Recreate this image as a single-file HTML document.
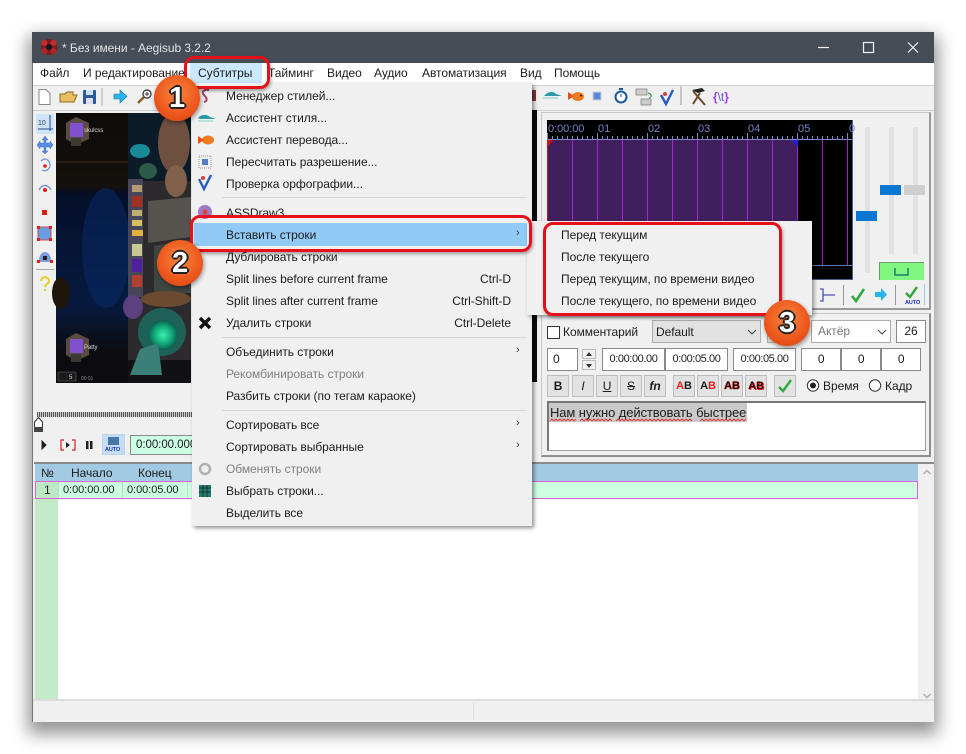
<!DOCTYPE html>
<html lang="ru"><head><meta charset="utf-8"><title>Aegisub</title>
<style>
html,body{margin:0;padding:0;background:#fff}
body{width:966px;height:754px;overflow:hidden;position:relative;font-family:"Liberation Sans","Noto Sans CJK JP",sans-serif;font-size:12px;color:#1c1c1c;letter-spacing:-.05px;filter:blur(.35px)}
.a{position:absolute}
.t{position:absolute;white-space:nowrap;line-height:16px;height:16px}
.sep{position:absolute;background:#d8d8d8;height:1px}
.box{position:absolute;box-sizing:border-box;border:1px solid #8a8a8a;background:#fff;text-align:center;line-height:21px;font-size:11px;letter-spacing:-.4px;height:23px}
.btn{position:absolute;box-sizing:border-box;top:375px;width:22px;height:22px;border:1px solid #bdbdbd;background:#e2e2e2;text-align:center;line-height:20px;font-size:12px}
.red{position:absolute;box-sizing:border-box;border:3.5px solid #e5101a;border-radius:10px;box-shadow:1px 2px 3px rgba(0,0,0,.35)}
.badge{position:absolute;width:46px;height:46px;border-radius:50%;background:radial-gradient(circle at 50% 40%,#f9873e 0%,#ee5a1e 55%,#d93c0c 100%);box-shadow:1px 2px 4px rgba(0,0,0,.4);text-align:center;font:bold 29px/46px "Liberation Sans",sans-serif;color:#fff;text-shadow:-2px 0 #222,2px 0 #222,0 -2px #222,0 2px #222,-1px -1px #222,1px 1px #222,1px -1px #222,-1px 1px #222}
.ar{position:absolute;left:516px;font-size:11px;color:#333}
svg{position:absolute;overflow:visible}
</style></head><body>

<!-- window -->
<div class="a" style="left:32px;top:32px;width:902px;height:690px;background:#f0f0f0;box-shadow:0 8px 16px 4px rgba(0,0,0,.42)"></div>
<div class="a" style="left:32px;top:63px;width:1px;height:659px;background:#777"></div>
<div class="a" style="left:32px;top:32px;width:902px;height:31px;background:#454d57"></div>
<svg style="left:40px;top:38px" width="18" height="18" viewBox="0 0 18 18"><circle cx="9" cy="9" r="8" fill="#7c1c1c"/><circle cx="4.5" cy="5" r="3" fill="#c62c2c"/><circle cx="13.5" cy="5" r="3" fill="#c62c2c"/><circle cx="4.5" cy="13" r="3" fill="#b02424"/><circle cx="13.5" cy="13" r="3" fill="#b02424"/><circle cx="9" cy="9" r="3" fill="#15151f"/></svg>
<div class="t" style="left:62px;top:40px;color:#e0e3e6;font-size:12px">* Без имени - Aegisub 3.2.2</div>
<svg style="left:818px;top:40px" width="105" height="16" viewBox="0 0 105 16" fill="none" stroke="#f2f2f2" stroke-width="1.2"><path d="M0 7.5H11"/><rect x="45.5" y="2.5" width="10" height="10"/><path d="M90 2.5 100 12.5M100 2.5 90 12.5"/></svg>

<!-- menu bar -->
<div class="a" style="left:33px;top:63px;width:901px;height:22px;background:#fff"></div>
<div class="a" style="left:33px;top:85px;width:901px;height:1px;background:#d0d0d0"></div>
<div class="a" style="left:190px;top:63px;width:72px;height:21px;background:#cce8ff"></div>
<div class="t" style="left:40px;top:65px">Файл</div>
<div class="t" style="left:83px;top:65px">И редактирование</div>
<div class="t" style="left:198px;top:65px">Субтитры</div>
<div class="t" style="left:268px;top:65px">Тайминг</div>
<div class="t" style="left:327px;top:65px">Видео</div>
<div class="t" style="left:374px;top:65px">Аудио</div>
<div class="t" style="left:422px;top:65px">Автоматизация</div>
<div class="t" style="left:520px;top:65px">Вид</div>
<div class="t" style="left:554px;top:65px">Помощь</div>

<!-- toolbar -->
<div class="a" style="left:33px;top:110px;width:901px;height:1px;background:#cfcfcf"></div>
<svg style="left:36px;top:87px" width="160" height="20" viewBox="0 0 160 20">
<path d="M3 2.5H10L14 6.5V17.5H3Z" fill="#fff" stroke="#888"/>
<path d="M24 7H29L31 5H37V8H41L38 15H24Z" fill="#e8c060" stroke="#8a6a20"/>
<rect x="47" y="3" width="13" height="14" rx="1" fill="#2a5a9c"/><rect x="50" y="3" width="7" height="5" fill="#cfe0f0"/><rect x="50" y="11" width="7" height="6" fill="#dde"/>
<path d="M66 1V19" stroke="#aaa"/>
<path d="M78 7H84V3L91 9.5 84 16V12H78Z" fill="#28b4e8" stroke="#1a78b0" stroke-width=".6"/>
<circle cx="111" cy="7" r="4" fill="#fff" stroke="#444" stroke-width="1.4"/><path d="M108 10 102 16" stroke="#8a5a20" stroke-width="2.4"/><path d="M109 7H113M111 5V9" stroke="#333"/>
</svg>
<div class="a" style="left:532px;top:90px;width:4px;height:11px;background:#803838"></div>
<svg style="left:530px;top:85px" width="210" height="22" viewBox="0 0 210 22">
<path d="M14 11C18 6 24 6 26 9L32 11H12Z" fill="#2a9aa8"/><path d="M13 13H28" stroke="#8cc" />
<ellipse cx="48" cy="11.500" rx="6" ry="4.500" fill="#f07a1e"/><path d="M38 7 44 11 38 15Z" fill="#e8501a"/><circle cx="51" cy="10.500" r="1" fill="#222"/>
<rect x="63" y="7" width="8" height="8" fill="#5a8ad8" stroke="#ccd"/>
<circle cx="91" cy="12" r="5.500" fill="#fff" stroke="#1a5a9c" stroke-width="2"/><rect x="89" y="3" width="4" height="2" fill="#1a5a9c"/><path d="M91 9V12" stroke="#1a5a9c"/>
<rect x="106" y="4" width="11" height="6" fill="#ccc" stroke="#666" stroke-width=".6"/><rect x="111" y="14" width="10" height="6" fill="#ccc" stroke="#666" stroke-width=".6"/><path d="M118 8C122 9 122 12 119 13" fill="none" stroke="#39a050" stroke-width="1.2"/>
<path d="M131 10 136 19 143 5" fill="none" stroke="#2a5ac0" stroke-width="2.400"/><circle cx="135" cy="9" r="2" fill="#d84040"/>
<path d="M151 1.500V20" stroke="#999"/>
<path d="M163 6 175 20M170 8 163 19" stroke="#6a4a28" stroke-width="2"/><path d="M162 5 172 3 175 6 168 8Z" fill="#222"/>
</svg>
<div class="t" style="left:713px;top:89px;font-size:12px;color:#a040e0;font-weight:bold">{<span style="color:#5060d0;font-weight:normal">\t</span>}</div>

<!-- left tool strip -->
<div class="a" style="left:36px;top:114px;width:18px;height:20px;background:#cfe4f8"></div>
<svg style="left:36px;top:114px" width="20" height="180" viewBox="0 0 20 180">
<text x="2" y="11" font-size="7" fill="#345" font-family="Liberation Sans">10</text><path d="M14 1V17M2 15H17" stroke="#2a4a90"/>
<path d="M9 22 12 26H10V29H14V27L17 31 14 35V33H10V37H12L9 40 6 37H8V33H4V35L1 31 4 27V29H8V26H6Z" fill="#5a8ce0" stroke="#2a5ab0" stroke-width=".4"/>
<path d="M5 47C9 43 14 46 14 51C14 55 10 58 6 56" fill="none" stroke="#7a9ad8" stroke-width="1.4"/><circle cx="9" cy="52" r="1.800" fill="#e02020"/>
<path d="M3 76C6 70 12 70 15 76" fill="none" stroke="#7a9ad8" stroke-width="1.4"/><circle cx="9" cy="76" r="2" fill="#e02020"/>
<rect x="6" y="96" width="5" height="5" fill="#e01818"/>
<rect x="2" y="113" width="13" height="13" fill="#6a9ce0" stroke="#c05050"/><rect x="1" y="112" width="3" height="3" fill="#e02020"/><rect x="13" y="112" width="3" height="3" fill="#e02020"/><rect x="1" y="124" width="3" height="3" fill="#e02020"/><rect x="13" y="124" width="3" height="3" fill="#e02020"/>
<path d="M3 147C3 135 15 135 15 147V148H3Z" fill="#7a9ce0"/><rect x="1" y="146" width="3" height="3" fill="#e02020"/><rect x="14" y="146" width="3" height="3" fill="#e02020"/><rect x="7" y="142" width="4" height="4" fill="#222"/>
<path d="M0 155.500H18" stroke="#aaa"/>
<path d="M5 167C5 162 13 162 13 167C13 170 9 170 9 173" fill="none" stroke="#e8d020" stroke-width="2"/><rect x="8" y="175" width="2" height="2" fill="#e8d020"/>
</svg>

<!-- video -->
<svg style="left:56px;top:113px" width="135" height="270" viewBox="0 0 135 270">
<defs>
<linearGradient id="b" x1="0" y1="0" x2="0" y2="1"><stop offset="0" stop-color="#0d0b09"/><stop offset=".27" stop-color="#15110d"/><stop offset=".3" stop-color="#050f28"/><stop offset=".7" stop-color="#061a40"/><stop offset=".88" stop-color="#0c0c12"/><stop offset="1" stop-color="#0a0a0c"/></linearGradient>
<radialGradient id="g"><stop offset="0" stop-color="#3cf0b0"/><stop offset=".6" stop-color="#10a878"/><stop offset="1" stop-color="#0e5c50"/></radialGradient>
</defs>
<rect width="135" height="270" fill="url(#b)"/>
<ellipse cx="50" cy="135" rx="24" ry="60" fill="#0a2a68" opacity=".55"/>
<rect x="0" y="48" width="76" height="2" fill="#2a2018"/>
<ellipse cx="5" cy="180" rx="9" ry="16" fill="#1e160c"/>
<path d="M72 0H135V86H92L84 68H72Z" fill="#0b1c28"/>
<path d="M72 68H135V270H72Z" fill="#2c2a2c"/>
<ellipse cx="84" cy="38" rx="10" ry="7" fill="#1a8a98"/>
<ellipse cx="92" cy="58" rx="9" ry="8" fill="#2a5a48"/>
<ellipse cx="118" cy="30" rx="16" ry="30" fill="#6e5040"/>
<ellipse cx="120" cy="68" rx="11" ry="16" fill="#80604a"/>
<path d="M92 88 135 84V124L92 130Z" fill="#56524e"/>
<path d="M98 133 135 126V180H98Z" fill="#3f4641"/>
<path d="M72 66H87V184H72Z" fill="#48465a"/>
<rect x="76" y="72" width="10" height="7" fill="#b89a70"/><rect x="76" y="83" width="10" height="11" fill="#a03020"/><rect x="76" y="97" width="10" height="6" fill="#c0b070"/><rect x="76" y="107" width="10" height="6" fill="#d8c060"/><rect x="76" y="117" width="11" height="6" fill="#e0b040"/><rect x="76" y="131" width="10" height="12" fill="#c8c890"/><rect x="76" y="146" width="10" height="13" fill="#5020a0"/><rect x="76" y="162" width="10" height="12" fill="#b04030"/>
<ellipse cx="77" cy="194" rx="10" ry="12" fill="#5c4080"/>
<ellipse cx="110" cy="186" rx="25" ry="8" fill="#6a4a30"/>
<ellipse cx="106" cy="219" rx="24" ry="24" fill="#1f6058"/>
<ellipse cx="107" cy="222" rx="15" ry="15" fill="url(#g)"/>
<path d="M0 247H135V270H0Z" fill="#0d0d10" opacity=".85"/>
<path d="M84 236 102 230 106 262H74Z" fill="#3a8078"/>
<path d="M20 4 33 10V26L20 32 10 26V10Z" fill="#5a4c40"/><rect x="14" y="10" width="13" height="14" fill="#8050d0"/><rect x="15" y="25" width="10" height="8" fill="#3a3a30"/>
<path d="M20 220 33 226V242L20 248 10 242V226Z" fill="#5a4c40"/><rect x="14" y="226" width="13" height="14" fill="#8050d0"/><rect x="15" y="241" width="10" height="8" fill="#3a3a30"/>
<text x="28" y="19" font-size="6" fill="#d8d8d8" font-family="Liberation Sans">skulcss</text>
<text x="28" y="236" font-size="6" fill="#d8d8d8" font-family="Liberation Sans">Patty</text>
<rect x="2" y="259" width="18" height="9" rx="1" fill="#1c1c1c" stroke="#666" stroke-width=".6"/>
<text x="13" y="266" font-size="6" fill="#ddd" font-family="Liberation Sans">5</text>
<text x="25" y="267" font-size="5" fill="#888" font-family="Liberation Sans">00:01</text>
</svg>

<!-- seek bar and playback -->
<div class="a" style="left:37px;top:412px;width:155px;height:5px;background:repeating-linear-gradient(90deg,#555 0 1px,#ccc 1px 2px)"></div>
<svg style="left:34px;top:417px" width="9" height="15" viewBox="0 0 9 15"><path d="M.5 5 4.500 .5 8.500 5V14.500H.5Z" fill="#fff" stroke="#333"/><rect x="0" y="10" width="9" height="5" fill="#444"/></svg>
<svg style="left:40px;top:438px" width="60" height="14" viewBox="0 0 60 14"><path d="M2 3 6 7 2 11Z" fill="#222" stroke="#222"/><path d="M24 2H21V12H24M32 2H35V12H32" fill="none" stroke="#e04040" stroke-width="1.4"/><path d="M26 4 30 7 26 10Z" fill="#222"/><rect x="46" y="3" width="2.500" height="8" fill="#222"/><rect x="50" y="3" width="2.500" height="8" fill="#222"/></svg>
<div class="a" style="left:102px;top:434px;width:23px;height:21px;background:#c4dcf4;border:1px solid #bcd4ec;box-sizing:border-box"></div>
<svg style="left:105px;top:437px" width="17" height="16" viewBox="0 0 17 16"><rect x="3" y="0" width="11" height="8" fill="#4878a8"/><text x="0" y="14" font-size="5.500" font-weight="bold" fill="#2030c0" font-family="Liberation Sans">AUTO</text></svg>
<div class="a" style="left:130px;top:435px;width:70px;height:20px;box-sizing:border-box;border:1px solid #888;background:#ccffe4;line-height:18px;padding-left:5px;overflow:hidden;white-space:nowrap;font-size:11.500px">0:00:00.000</div>

<!-- audio panel -->
<div class="a" style="left:541px;top:112px;width:390px;height:198px;box-sizing:border-box;border:1px solid #c8c8c8;border-right:2px solid #9a9a9a;border-bottom:2px solid #9a9a9a"></div>
<div class="a" style="left:532px;top:110px;width:5px;height:272px;background:#0c0c10"></div>
<div class="a" style="left:547px;top:120px;width:306px;height:160px;background:#000"></div>
<div class="a" style="left:548px;top:139px;width:250px;height:126px;background:#3f1f5e;border-radius:3px 3px 0 0"></div>
<svg style="left:547px;top:120px" width="306" height="160" viewBox="0 0 306 160">
<g fill="none" stroke="#8088c8"><path d="M0 19.500H306"/><path d="M.5 13V20M50.500 13V20M100.500 13V20M150.500 13V20M200.500 13V20M250.500 13V20M300.500 13V20"/>
<path d="M5.500 16V20M10.500 16V20M15.500 16V20M20.500 16V20M25.500 16V20M30.500 16V20M35.500 16V20M40.500 16V20M45.500 16V20M55.500 16V20M60.500 16V20M65.500 16V20M70.500 16V20M75.500 16V20M80.500 16V20M85.500 16V20M90.500 16V20M95.500 16V20M105.500 16V20M110.500 16V20M115.500 16V20M120.500 16V20M125.500 16V20M130.500 16V20M135.500 16V20M140.500 16V20M145.500 16V20M155.500 16V20M160.500 16V20M165.500 16V20M170.500 16V20M175.500 16V20M180.500 16V20M185.500 16V20M190.500 16V20M195.500 16V20M205.500 16V20M210.500 16V20M215.500 16V20M220.500 16V20M225.500 16V20M230.500 16V20M235.500 16V20M240.500 16V20M245.500 16V20M255.500 16V20M260.500 16V20M265.500 16V20M270.500 16V20M275.500 16V20M280.500 16V20M285.500 16V20M290.500 16V20M295.500 16V20"/></g>
<g stroke="#a722d8"><path d="M25.500 20V145M50.500 20V145M75.500 20V145M100.500 20V145M125.500 20V145M150.500 20V145M175.500 20V145M200.500 20V145M225.500 20V145M250.500 20V145"/></g>
<g stroke="#a020b8"><path d="M275.500 20V145M300.500 20V145"/></g>
<path d="M.5 20V145" stroke="#e01010"/><path d="M1 20H6L1 26Z" fill="#e01010"/><path d="M251 20H244L251 27Z" fill="#2020e0"/>
<path d="M0 145.500H306" stroke="#5a78b0"/>
<path d="M305.500 0V159.500H0" fill="none" stroke="#44608c"/>
<g font-family="Liberation Sans" font-size="11" fill="#7684c8"><text x="1" y="12">0:00:00</text><text x="51" y="12">01</text><text x="101" y="12">02</text><text x="151" y="12">03</text><text x="201" y="12">04</text><text x="251" y="12">05</text><text x="302" y="12">0</text></g>
</svg>
<!-- sliders -->
<div class="a" style="left:865px;top:127px;width:5px;height:146px;background:#e2e2e2"></div>
<div class="a" style="left:889px;top:127px;width:5px;height:127px;background:#e2e2e2"></div>
<div class="a" style="left:913px;top:127px;width:5px;height:127px;background:#e2e2e2"></div>
<div class="a" style="left:856px;top:211px;width:21px;height:10px;background:#0a78d2"></div>
<div class="a" style="left:880px;top:185px;width:21px;height:10px;background:#0a78d2"></div>
<div class="a" style="left:904px;top:185px;width:21px;height:10px;background:#cfcfcf"></div>
<div class="a" style="left:879px;top:262px;width:45px;height:18px;box-sizing:border-box;background:#80f880;border-top:1px solid #6a9a6a;border-left:1px solid #6a9a6a"></div>
<svg style="left:893px;top:266px" width="18" height="12" viewBox="0 0 18 12"><path d="M2 2V9H15V2" fill="none" stroke="#1f7a70" stroke-width="1.500"/></svg>
<svg style="left:815px;top:283px" width="115" height="24" viewBox="0 0 115 24">
<path d="M5 6H8V18H5M8 12H20" fill="none" stroke="#4a50b8" stroke-width="1.300"/><path d="M28.500 2V22" stroke="#999"/>
<path d="M37 13 41 18 49 6" fill="none" stroke="#30a840" stroke-width="2.600"/>
<path d="M60 9H66V5L72 11.500 66 18V14H60Z" fill="#28b4e8"/>
<path d="M80.500 2V22" stroke="#999"/>
<path d="M91 10 95 14 102 4" fill="none" stroke="#30a840" stroke-width="2.400"/><text x="90" y="21" font-size="5.500" font-weight="bold" fill="#2030c0" font-family="Liberation Sans">AUTO</text>
<path d="M109.500 1V22" stroke="#a0c8e8"/>
</svg>

<!-- edit panel -->
<div class="a" style="left:541px;top:313px;width:390px;height:144px;box-sizing:border-box;border:1px solid #c8c8c8;border-right:2px solid #8f8f8f;border-bottom:2px solid #8f8f8f"></div>
<div class="a" style="left:547px;top:326px;width:13px;height:13px;box-sizing:border-box;border:1px solid #333;background:#fff"></div>
<div class="t" style="left:563px;top:324px">Комментарий</div>
<div class="a" style="left:652px;top:320px;width:109px;height:23px;box-sizing:border-box;border:1px solid #adadad;background:#e1e1e1;line-height:23px;padding-left:3px">Default</div>
<svg style="left:747px;top:329px" width="10" height="6" viewBox="0 0 10 6"><path d="M1 1 5 5 9 1" fill="none" stroke="#444"/></svg>
<div class="a" style="left:767px;top:322px;width:24px;height:21px;box-sizing:border-box;border:1px solid #adadad;background:#e1e1e1"></div>
<div class="a" style="left:811px;top:320px;width:80px;height:23px;box-sizing:border-box;border:1px solid #adadad;background:#fff;line-height:21px;padding-left:6px;color:#777">Актёр</div>
<svg style="left:877px;top:329px" width="10" height="6" viewBox="0 0 10 6"><path d="M1 1 5 5 9 1" fill="none" stroke="#444"/></svg>
<div class="box" style="left:896px;top:320px;width:30px;font-size:12px;letter-spacing:0">26</div>

<div class="box" style="left:547px;top:348px;width:31px;text-align:left;padding-left:5px;font-size:12px">0</div>
<div class="a" style="left:582px;top:349px;width:14px;height:10px;box-sizing:border-box;border:1px solid #bbb;background:#f0f0f0"></div>
<div class="a" style="left:582px;top:360px;width:14px;height:10px;box-sizing:border-box;border:1px solid #bbb;background:#f0f0f0"></div>
<svg style="left:585px;top:351px" width="8" height="18" viewBox="0 0 8 18"><path d="M1 5 4 1 7 5ZM1 13 7 13 4 17Z" fill="#333"/></svg>
<div class="box" style="left:602px;top:348px;width:63px">0:00:00.00</div>
<div class="box" style="left:665px;top:348px;width:63px">0:00:05.00</div>
<div class="box" style="left:733px;top:348px;width:63px">0:00:05.00</div>
<div class="box" style="left:801px;top:348px;width:40px;font-size:12px">0</div>
<div class="box" style="left:841px;top:348px;width:40px;font-size:12px">0</div>
<div class="box" style="left:881px;top:348px;width:40px;font-size:12px">0</div>

<div class="btn" style="left:547px;font-weight:bold">B</div>
<div class="btn" style="left:572px;font-style:italic">I</div>
<div class="btn" style="left:596px;text-decoration:underline">U</div>
<div class="btn" style="left:620px;text-decoration:line-through">S</div>
<div class="btn" style="left:644px;font-style:italic;font-weight:bold">fn</div>
<div class="btn" style="left:673px;font-size:11px;font-weight:bold"><span style="color:#e02020">A</span>B</div>
<div class="btn" style="left:697px;font-size:11px;font-weight:bold">A<span style="color:#e02020">B</span></div>
<div class="btn" style="left:721px;font-size:11px;font-weight:bold;color:#200;text-shadow:0 0 1px #e02020,0 0 1px #e02020">AB</div>
<div class="btn" style="left:745px;font-size:11px;font-weight:bold;color:#300;text-shadow:1px 1px 0 #e02020">AB</div>
<div class="btn" style="left:774px"></div>
<svg style="left:778px;top:379px" width="15" height="14" viewBox="0 0 15 14"><path d="M1 8 5 12 13 1" fill="none" stroke="#30a840" stroke-width="2.400"/></svg>
<svg style="left:806px;top:378px" width="80" height="15" viewBox="0 0 80 15"><circle cx="7" cy="7.500" r="5.700" fill="#fff" stroke="#333"/><circle cx="7" cy="7.500" r="3" fill="#222"/><circle cx="69" cy="7.500" r="5.700" fill="#fff" stroke="#333"/></svg>
<div class="t" style="left:823px;top:378px">Время</div>
<div class="t" style="left:885px;top:378px">Кадр</div>

<div class="a" style="left:547px;top:401px;width:379px;height:50px;box-sizing:border-box;border:1px solid #a0a0a0;border-top:2px solid #777;border-left:2px solid #777;background:#fff"></div>
<div class="a" style="left:549px;top:403px;width:198px;height:19px;background:#c9c9c9"></div>
<div class="t" style="left:550px;top:405px;font-size:13px;letter-spacing:-.1px">Нам нужно действовать быстрее</div>
<svg style="left:550px;top:419px" width="198" height="3" viewBox="0 0 198 3"><path d="M0 2 2 0 4 2 6 0 8 2 10 0 12 2 14 0 16 2 18 0 20 2 22 0 24 2 26 0M30 2 32 0 34 2 36 0 38 2 40 0 42 2 44 0 46 2 48 0 50 2 52 0 54 2 56 0 58 2 60 0 62 2M66 2 68 0 70 2 72 0 74 2 76 0 78 2 80 0 82 2 84 0 86 2 88 0 90 2 92 0 94 2 96 0 98 2 100 0 102 2 104 0 106 2 108 0 110 2 112 0 114 2 116 0 118 2 120 0 122 2 124 0 126 2 128 0 130 2 132 0 134 2 136 0 138 2 140 0 142 2M150 2 152 0 154 2 156 0 158 2 160 0 162 2 164 0 166 2 168 0 170 2 172 0 174 2 176 0 178 2 180 0 182 2 184 0 186 2 188 0 190 2 192 0 194 2 196 0" fill="none" stroke="#e02020" stroke-width=".8"/></svg>

<!-- grid -->
<div class="a" style="left:34px;top:462px;width:900px;height:2px;background:#8a8a8a"></div>
<div class="a" style="left:35px;top:464px;width:883px;height:18px;background:#a2cbe3"></div>
<div class="a" style="left:35px;top:482px;width:883px;height:218px;background:#fff"></div>
<div class="a" style="left:35px;top:481px;width:883px;height:18px;box-sizing:border-box;border:1px solid #e060d8;background:#ccffe2"></div>
<div class="a" style="left:36px;top:482px;width:22px;height:16px;background:#bce8c4"></div>
<div class="a" style="left:35px;top:499px;width:23px;height:200px;background:#c2eac8"></div>
<div class="a" style="left:58px;top:482px;width:1px;height:16px;background:#c4d8c8"></div>
<div class="a" style="left:122px;top:482px;width:1px;height:16px;background:#c4d8c8"></div>
<div class="a" style="left:187px;top:482px;width:1px;height:16px;background:#c4d8c8"></div>
<div class="t" style="left:41px;top:465px">№</div>
<div class="t" style="left:71px;top:465px">Начало</div>
<div class="t" style="left:138px;top:465px">Конец</div>
<div class="t" style="left:44px;top:482px">1</div>
<div class="t" style="left:63px;top:482px;font-size:11px">0:00:00.00</div>
<div class="t" style="left:127px;top:482px;font-size:11px">0:00:05.00</div>
<svg style="left:922px;top:468px" width="10" height="232" viewBox="0 0 10 232"><path d="M1.500 6 5 2.500 8.500 6M1.500 226 5 229.500 8.500 226" fill="none" stroke="#aaa" stroke-width="1.300"/></svg>
<div class="a" style="left:33px;top:699px;width:901px;height:2px;background:#dcdcdc"></div>
<div class="a" style="left:473px;top:703px;width:1px;height:17px;background:#dcdcdc"></div>

<!-- subtitle menu -->
<div class="a" style="left:192px;top:83px;width:340px;height:443px;background:#f0f0f0;box-shadow:2px 2px 4px rgba(0,0,0,.45)"></div>
<svg style="left:195px;top:87px" width="24" height="440" viewBox="0 0 24 440">
<path d="M14 3C9 2 6 5 9 8C12 11 13 14 9 15" fill="none" stroke="#a84060" stroke-width="2"/>
<path d="M3 31C6 27 12 27 15 30L21 32H5Z" fill="#2a9aa8"/><path d="M3 34H18" stroke="#8cc"/>
<ellipse cx="13" cy="53" rx="6" ry="4.500" fill="#f07a1e"/><path d="M3 49 9 53 3 57Z" fill="#e8501a"/>
<rect x="4" y="69" width="12" height="12" fill="#eee" stroke="#999" stroke-dasharray="1 1"/><rect x="7" y="72" width="6" height="6" fill="#5a7ac8"/>
<path d="M4 92 9 102 16 88" fill="none" stroke="#2a5ac0" stroke-width="2.400"/><circle cx="8" cy="91" r="2" fill="#d84040"/>
<circle cx="10" cy="125" r="7" fill="#a078c8"/><circle cx="10" cy="125" r="2.500" fill="#d84040"/>
<path d="M5 231 15 241M15 231 5 241" stroke="#111" stroke-width="3.400"/>
<circle cx="10" cy="382" r="5" fill="none" stroke="#b0b0b0" stroke-width="2.400"/>
<rect x="4" y="398" width="12" height="12" fill="#1f7f70"/><path d="M4 401H16M4 405H16M8 398V410M12 398V410" stroke="#222" stroke-width=".8"/>
</svg>
<div class="t" style="left:226px;top:88px">Менеджер стилей...</div>
<div class="t" style="left:226px;top:110px">Ассистент стиля...</div>
<div class="t" style="left:226px;top:132px">Ассистент перевода...</div>
<div class="t" style="left:226px;top:154px">Пересчитать разрешение...</div>
<div class="t" style="left:226px;top:176px">Проверка орфографии...</div>
<div class="sep" style="left:222px;top:197px;width:305px"></div>
<div class="t" style="left:226px;top:205px">ASSDraw3</div>
<div class="a" style="left:194px;top:223px;width:333px;height:23px;background:#91c9f7"></div>
<div class="t" style="left:226px;top:227px">Вставить строки</div>
<div class="ar" style="top:227px">&#8250;</div>
<div class="t" style="left:226px;top:249px">Дублировать строки</div>
<div class="t" style="left:226px;top:271px">Split lines before current frame</div>
<div class="t" style="left:451px;top:271px;width:60px;text-align:right">Ctrl-D</div>
<div class="t" style="left:226px;top:293px">Split lines after current frame</div>
<div class="t" style="left:431px;top:293px;width:80px;text-align:right">Ctrl-Shift-D</div>
<div class="t" style="left:226px;top:315px">Удалить строки</div>
<div class="t" style="left:431px;top:315px;width:80px;text-align:right">Ctrl-Delete</div>
<div class="sep" style="left:222px;top:337px;width:305px"></div>
<div class="t" style="left:226px;top:344px">Объединить строки</div>
<div class="ar" style="top:344px">&#8250;</div>
<div class="t" style="left:226px;top:366px;color:#808080">Рекомбинировать строки</div>
<div class="t" style="left:226px;top:388px">Разбить строки (по тегам караоке)</div>
<div class="sep" style="left:222px;top:410px;width:305px"></div>
<div class="t" style="left:226px;top:417px">Сортировать все</div>
<div class="ar" style="top:417px">&#8250;</div>
<div class="t" style="left:226px;top:439px">Сортировать выбранные</div>
<div class="ar" style="top:439px">&#8250;</div>
<div class="t" style="left:226px;top:461px;color:#808080">Обменять строки</div>
<div class="t" style="left:226px;top:483px">Выбрать строки...</div>
<div class="t" style="left:226px;top:505px">Выделить все</div>

<!-- submenu -->
<div class="a" style="left:527px;top:221px;width:285px;height:94px;background:#f0f0f0;box-shadow:2px 2px 4px rgba(0,0,0,.4)"></div>
<div class="t" style="left:561px;top:227px">Перед текущим</div>
<div class="t" style="left:561px;top:249px">После текущего</div>
<div class="t" style="left:561px;top:271px">Перед текущим, по времени видео</div>
<div class="t" style="left:561px;top:293px">После текущего, по времени видео</div>

<!-- annotations -->
<div class="red" style="left:184px;top:56px;width:86px;height:33px"></div>
<div class="red" style="left:190px;top:215px;width:342px;height:37px"></div>
<div class="red" style="left:543px;top:222px;width:239px;height:94px"></div>
<div class="badge" style="left:154px;top:75px">1</div>
<div class="badge" style="left:157px;top:240px">2</div>
<div class="badge" style="left:764px;top:300px">3</div>
</body></html>
